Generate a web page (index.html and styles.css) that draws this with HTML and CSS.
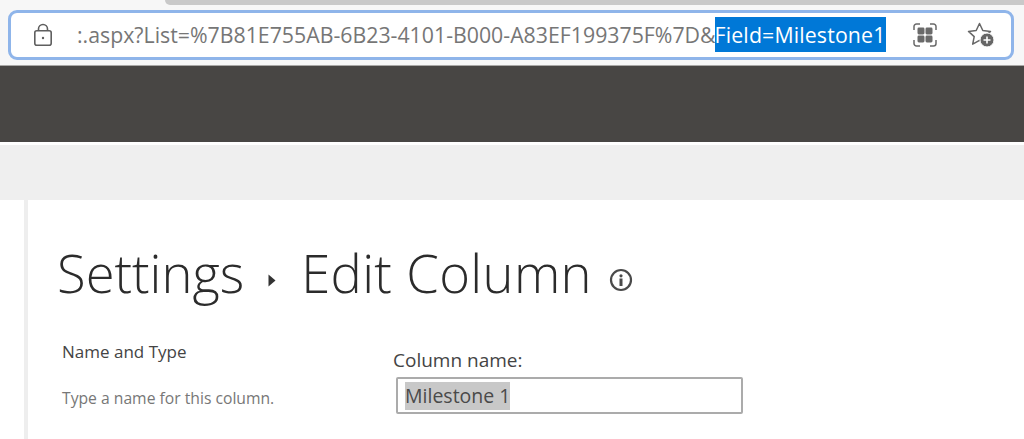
FILE: index.html
```html
<!DOCTYPE html>
<html lang="en">
<head>
<meta charset="utf-8">
<title>Edit Column</title>
<link rel="stylesheet" href="styles.css">
</head>
<body>
<header class="chrome">
  <div class="tabstrip"><div class="tab"></div></div>
  <div class="address">
    <svg class="lock" width="20" height="24" viewBox="0 0 20 24" fill="none" stroke="#5f5f5f" stroke-width="1.6">
      <rect x="1.8" y="7.8" width="16.4" height="14.4" rx="2"/>
      <path d="M5.5 7.8V6a4.5 4.5 0 0 1 9 0v1.8"/>
      <circle cx="10" cy="15" r="1.2" fill="#5f5f5f" stroke="none"/>
    </svg>
    <div class="url"><span>:.aspx?List=%7B81E755AB-6B23-4101-B000-A83EF199375F%7D&amp;</span><span class="sel">Field=Milestone1</span></div>
    <svg class="apps" width="24" height="24" viewBox="0 0 24 24" fill="none">
      <path d="M1 7V3.500A2.500 2.500 0 0 1 3.500 1H7M17 1h3.500A2.500 2.500 0 0 1 23 3.500V7M23 17v3.500a2.500 2.500 0 0 1-2.500 2.500H17M7 23H3.500A2.500 2.500 0 0 1 1 20.500V17" stroke="#6a6a6a" stroke-width="1.500"/>
      <rect x="4.500" y="4.500" width="7" height="7" rx="1.400" fill="#6a6a6a"/>
      <rect x="12.500" y="4.500" width="7" height="7" rx="1.400" fill="#6a6a6a"/>
      <rect x="4.500" y="12.500" width="7" height="7" rx="1.400" fill="#6a6a6a"/>
      <rect x="12.500" y="12.500" width="7" height="7" rx="1.400" fill="#6a6a6a"/>
    </svg>
    <svg class="fav" width="28" height="26" viewBox="0 0 28 26" fill="none">
      <path d="M12.500 1.500l3.300 7 7.700.9-5.700 5.200 1.500 7.500-6.800-3.800-6.800 3.800 1.500-7.500L1.500 9.400l7.700-.9z" stroke="#666" stroke-width="1.500" stroke-linejoin="round"/>
      <circle cx="20" cy="18" r="7" fill="#666" stroke="#fff" stroke-width="1"/>
      <path d="M20 14.500v7M16.500 18h7" stroke="#fff" stroke-width="1.600"/>
    </svg>
  </div>
</header>
<div class="suitebar"></div>
<div class="ribbon"></div>
<div class="content">
  <aside class="side"></aside>
  <main class="main">
    <h1 class="title">
      <span>Settings</span>
      <svg class="arrow" width="8" height="13" viewBox="0 0 8 13"><path d="M0.500 0.500L7.500 6.500L0.500 12.500z" fill="#333"/></svg>
      <span class="page">Edit Column</span>
      <svg class="info" width="24" height="24" viewBox="0 0 24 24" fill="none">
        <circle cx="12" cy="12" r="10" stroke="#4a4a4a" stroke-width="2.200"/>
        <circle cx="12" cy="7.800" r="1.600" fill="#4a4a4a"/>
        <rect x="10.500" y="10.500" width="3" height="7.500" fill="#4a4a4a"/>
      </svg>
    </h1>
    <section class="form">
      <div class="desc">
        <div class="desc-title">Name and Type</div>
        <div class="desc-text">Type a name for this column.</div>
      </div>
      <div class="field">
        <label class="label">Column name:</label>
        <div class="input"><span class="value">Milestone 1</span></div>
      </div>
    </section>
  </main>
</div>
</body>
</html>
```
FILE: styles.css
```css
* { box-sizing: border-box; }
html, body { margin: 0; height: 439px; overflow: hidden; background: #fff; }
body { font-family: "Open Sans", "Noto Sans", sans-serif; color: #333; }

.chrome { height: 66px; background: #f7f7f7; border-bottom: 1px solid #a9a8a6; display: flex; flex-direction: column; }
.tabstrip { height: 5px; padding-left: 165px; }
.tab { height: 100%; background: #c9c9c9; border-bottom-left-radius: 6px; }

.address { margin: 5px 10px 0 8px; height: 50px; background: #fff; border: 3px solid #8fb5ea; border-radius: 9px; display: flex; align-items: center; }
.lock { margin-left: 22px; flex: none; }
.url { margin: -2px 0 0 24px; width: 811px; font-size: 21.300px; color: #767676; white-space: nowrap; display: flex; align-items: center; line-height: 35px; }
.sel { background: #0078d7; color: #fff; margin-left: -1px; letter-spacing: 0.150px; }
.apps { margin-left: 25px; flex: none; }
.fav { margin-left: 30px; flex: none; }

.suitebar { height: 76px; background: #484644; }
.ribbon { height: 58px; background: #efefef; border-top: 3px solid #fff; }

.content { display: flex; height: 239px; }
.side { width: 28px; background: #fff; border-right: 4px solid #eeeeee; }
.main { flex: 1; padding: 39px 0 0 29px; }

.title { margin: 0; display: flex; align-items: center; font-size: 52.500px; font-weight: 300; color: #2b2b2b; line-height: 68px; height: 68px; }
.page { letter-spacing: 0.350px; }
.arrow { margin: 14px 25px 0 24px; flex: none; }
.info { margin: 14px 0 0 17px; flex: none; }

.form { display: flex; margin-top: 34px; padding-left: 5px; }
.desc { width: 331px; }
.desc-title { font-size: 17px; line-height: 22px; color: #444; }
.desc-text { margin-top: 24px; font-size: 15.700px; line-height: 22px; color: #777; }
.field { display: flex; flex-direction: column; margin-top: 6px; }
.label { font-size: 19px; line-height: 26px; color: #444; }
.input { margin: 4px 0 0 3px; width: 347px; height: 37px; border: 2px solid #ababab; border-radius: 2px; display: flex; align-items: center; padding: 1px 0 0 7px; }
.value { background: #c8c8c8; font-size: 19.500px; line-height: 28px; color: #4a4a4a; }
```
